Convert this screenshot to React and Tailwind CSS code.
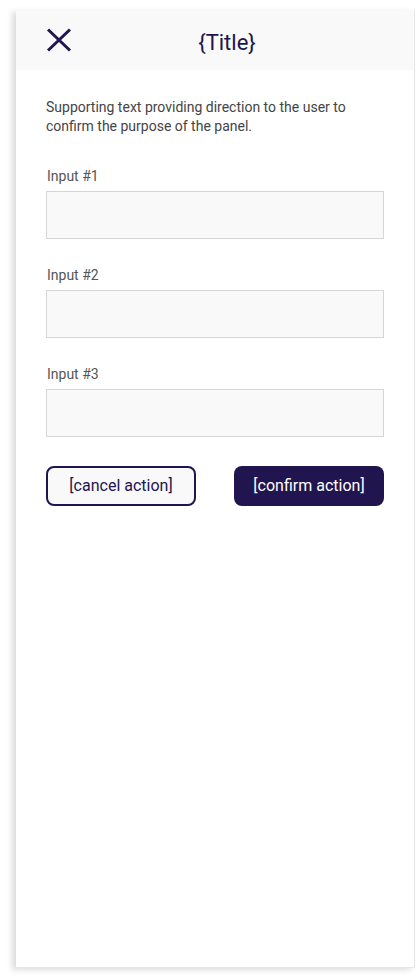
import React from "react";

function Field({ label }) {
  return (
    <div className="flex flex-col">
      <label className="text-[14px] leading-[16px] text-[#555555] mb-[7px] pl-[1px]">{label}</label>
      <div className="h-[48px] bg-[#f9f9f9] border border-[#d6d6d6]" />
    </div>
  );
}

export default function App() {
  return (
    <div className="w-[418px] h-[978px] bg-white pt-[10px] pl-[16px]" style={{ fontFamily: "Roboto, 'Noto Sans', sans-serif" }}>
      <div className="w-[399px] h-[958px] bg-white border-r border-b border-[#e6e6e6] shadow-[-4px_2px_6px_rgba(0,0,0,0.14)] flex flex-col">
        <div className="h-[60px] bg-[#f9f9f9] flex items-center px-[30px]">
          <svg width="26" height="24" viewBox="0 0 26 24" className="shrink-0">
            <path d="M2 1.5 L24 22.5 M24 1.5 L2 22.5" stroke="#21154f" strokeWidth="3" fill="none" />
          </svg>
          <div className="flex-1 text-center text-[22px] leading-[26px] text-[#21154f] pt-[6px] pr-[2px]">{"{Title}"}</div>
        </div>
        <div className="px-[30px] pt-[28px] flex flex-col">
          <p className="text-[14px] leading-[19px] text-[#444444]">
            Supporting text providing direction to the user to confirm the purpose of the panel.
          </p>
          <div className="mt-[32px] flex flex-col gap-[28px]">
            <Field label="Input #1" />
            <Field label="Input #2" />
            <Field label="Input #3" />
          </div>
          <div className="mt-[29px] flex justify-between">
            <button className="w-[150px] h-[40px] rounded-[8px] border-2 border-[#21154f] bg-[#f9f9f9] text-[16px] text-[#21154f]">
              [cancel action]
            </button>
            <button className="w-[150px] h-[40px] rounded-[8px] bg-[#21154f] text-[16px] text-white">
              [confirm action]
            </button>
          </div>
        </div>
      </div>
    </div>
  );
}
